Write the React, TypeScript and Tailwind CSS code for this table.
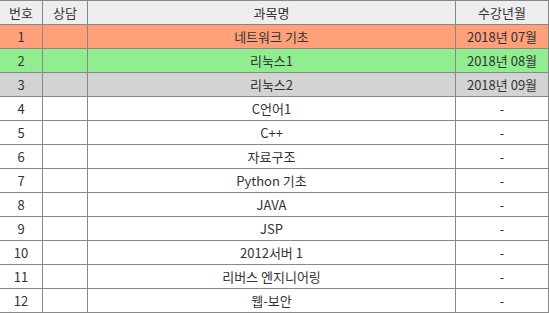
import React from "react";

type Row = { no: number; name: string; date: string; bg: string };

const rows: Row[] = [
  { no: 1, name: "네트워크 기초", date: "2018년 07월", bg: "bg-[#ffa07a]" },
  { no: 2, name: "리눅스1", date: "2018년 08월", bg: "bg-[#90ee90]" },
  { no: 3, name: "리눅스2", date: "2018년 09월", bg: "bg-[#d3d3d3]" },
  { no: 4, name: "C언어1", date: "-", bg: "bg-white" },
  { no: 5, name: "C++", date: "-", bg: "bg-white" },
  { no: 6, name: "자료구조", date: "-", bg: "bg-white" },
  { no: 7, name: "Python 기초", date: "-", bg: "bg-white" },
  { no: 8, name: "JAVA", date: "-", bg: "bg-white" },
  { no: 9, name: "JSP", date: "-", bg: "bg-white" },
  { no: 10, name: "2012서버 1", date: "-", bg: "bg-white" },
  { no: 11, name: "리버스 엔지니어링", date: "-", bg: "bg-white" },
  { no: 12, name: "웹-보안", date: "-", bg: "bg-white" },
];

function Cells({ a, b, c, d, bg }: { a: React.ReactNode; b: React.ReactNode; c: React.ReactNode; d: React.ReactNode; bg: string }) {
  const cell = "h-[24px] flex items-center justify-center border-r border-b border-[#888888]";
  return (
    <div className={`flex ${bg}`}>
      <div className={`${cell} w-[43px]`}>{a}</div>
      <div className={`${cell} w-[45px]`}>{b}</div>
      <div className={`${cell} w-[368px]`}>{c}</div>
      <div className={`${cell} w-[93px]`}>{d}</div>
    </div>
  );
}

export default function App() {
  return (
    <div
      className="w-[549px] bg-white text-[13px] text-[#333333] leading-none border-t border-[#888888]"
      style={{ fontFamily: '"Noto Sans CJK KR", "Noto Sans", sans-serif' }}
    >
      <Cells a="번호" b="상담" c="과목명" d="수강년월" bg="bg-[#eeeeee]" />
      {rows.map((r) => (
        <Cells key={r.no} a={r.no} b="" c={r.name} d={r.date} bg={r.bg} />
      ))}
    </div>
  );
}
